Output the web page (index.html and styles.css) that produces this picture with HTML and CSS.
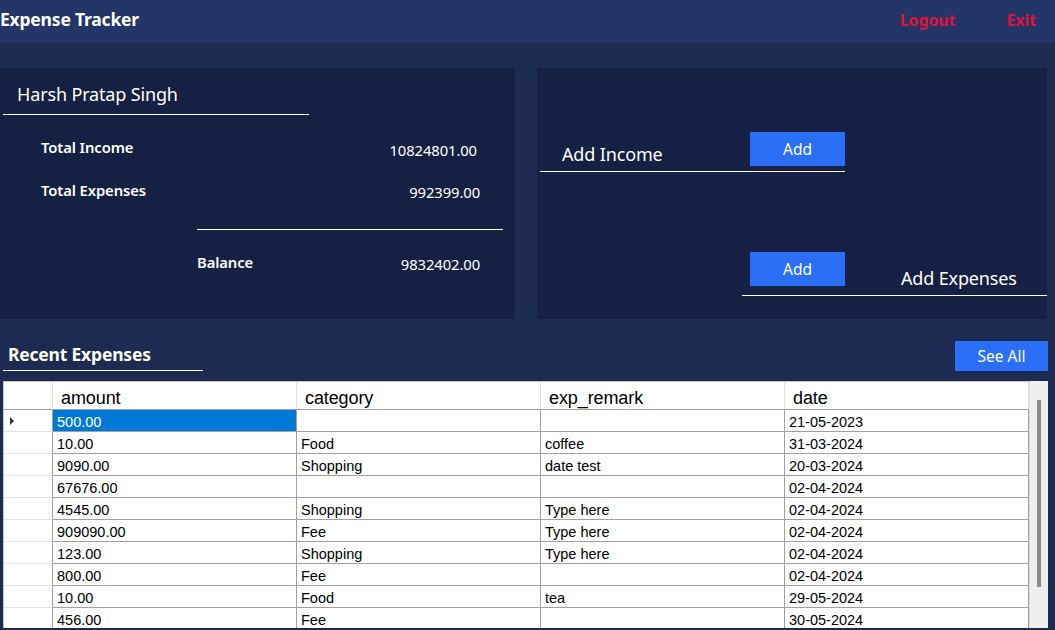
FILE: index.html
```html
<!DOCTYPE html>
<html lang="en">
<head>
<meta charset="utf-8">
<title>Expense Tracker</title>
<link rel="stylesheet" href="styles.css">
</head>
<body>
<header class="topbar">
  <h1 class="app-title">Expense Tracker</h1>
  <nav class="top-actions">
    <a class="top-link logout">Logout</a>
    <a class="top-link exit">Exit</a>
  </nav>
</header>
<main class="content">
  <section class="panels">
    <div class="panel summary">
      <div class="user-name">Harsh Pratap Singh</div>
      <div class="stat-row row-income"><span class="stat-label">Total Income</span><span class="stat-value">10824801.00</span></div>
      <div class="stat-row row-expenses"><span class="stat-label">Total Expenses</span><span class="stat-value">992399.00</span></div>
      <div class="divider"></div>
      <div class="stat-row row-balance"><span class="stat-label">Balance</span><span class="stat-value">9832402.00</span></div>
    </div>
    <div class="panel actions">
      <div class="action-block income-block">
        <span class="action-label">Add Income</span>
        <button class="btn add-btn">Add</button>
      </div>
      <div class="action-block expense-block">
        <button class="btn add-btn">Add</button>
        <span class="action-label">Add Expenses</span>
      </div>
    </div>
  </section>
  <section class="recent">
    <div class="recent-head">
      <h2 class="recent-title">Recent Expenses</h2>
      <button class="btn see-all">See All</button>
    </div>
    <div class="grid-frame">
      <div class="grid">
        <div class="grow ghead">
          <div class="rh"></div>
          <div class="hc">amount</div>
          <div class="hc">category</div>
          <div class="hc">exp_remark</div>
          <div class="hc">date</div>
        </div>
        <div class="grow">
          <div class="rh current"><span class="tri"></span></div>
          <div class="dc selected">500.00</div>
          <div class="dc"></div>
          <div class="dc"></div>
          <div class="dc">21-05-2023</div>
        </div>
        <div class="grow"><div class="rh"></div><div class="dc">10.00</div><div class="dc">Food</div><div class="dc">coffee</div><div class="dc">31-03-2024</div></div>
        <div class="grow"><div class="rh"></div><div class="dc">9090.00</div><div class="dc">Shopping</div><div class="dc">date test</div><div class="dc">20-03-2024</div></div>
        <div class="grow"><div class="rh"></div><div class="dc">67676.00</div><div class="dc"></div><div class="dc"></div><div class="dc">02-04-2024</div></div>
        <div class="grow"><div class="rh"></div><div class="dc">4545.00</div><div class="dc">Shopping</div><div class="dc">Type here</div><div class="dc">02-04-2024</div></div>
        <div class="grow"><div class="rh"></div><div class="dc">909090.00</div><div class="dc">Fee</div><div class="dc">Type here</div><div class="dc">02-04-2024</div></div>
        <div class="grow"><div class="rh"></div><div class="dc">123.00</div><div class="dc">Shopping</div><div class="dc">Type here</div><div class="dc">02-04-2024</div></div>
        <div class="grow"><div class="rh"></div><div class="dc">800.00</div><div class="dc">Fee</div><div class="dc"></div><div class="dc">02-04-2024</div></div>
        <div class="grow"><div class="rh"></div><div class="dc">10.00</div><div class="dc">Food</div><div class="dc">tea</div><div class="dc">29-05-2024</div></div>
        <div class="grow"><div class="rh"></div><div class="dc">456.00</div><div class="dc">Fee</div><div class="dc"></div><div class="dc">30-05-2024</div></div>
      </div>
      <div class="vscroll"><div class="thumb"></div></div>
    </div>
  </section>
</main>
</body>
</html>
```

FILE: styles.css
```css
* { box-sizing: border-box; }

html, body {
  margin: 0;
  padding: 0;
  height: 630px;
  overflow: hidden;
}

body {
  background: #1d2a52;
  font-family: "Noto Sans", "Open Sans", sans-serif;
  color: #ffffff;
}

/* ---------- top bar ---------- */
.topbar {
  height: 43px;
  background: #243567;
  display: flex;
  align-items: center;
  justify-content: space-between;
}

.app-title {
  margin: 0 0 5px 0;
  font-size: 17.5px;
  font-weight: 700;
  letter-spacing: -0.2px;
  line-height: 24px;
}

.top-actions {
  display: flex;
  gap: 51px;
  margin-right: 19px;
  margin-bottom: 3px;
}

.top-link {
  color: #dc143c;
  font-weight: 700;
  font-size: 16px;
  letter-spacing: -0.1px;
  cursor: pointer;
}

/* ---------- panels ---------- */
.content {
  padding-top: 25px;
}

.panels {
  display: flex;
  gap: 22px;
  height: 251px;
}

.panel {
  background: #162044;
  height: 251px;
}

.summary {
  width: 515px;
}

.actions {
  width: 510px;
  padding-top: 64px;
}

.user-name {
  margin-left: 3px;
  width: 306px;
  padding: 14px 0 8px 14px;
  font-size: 18px;
  line-height: 24px;
  letter-spacing: -0.15px;
  border-bottom: 1px solid #ffffff;
}

.stat-row {
  display: flex;
  align-items: flex-start;
  font-size: 14.8px;
  line-height: 20px;
}

.stat-label {
  font-weight: 600;
  letter-spacing: -0.1px;
}

.stat-value {
  margin-left: auto;
  letter-spacing: -0.1px;
}

.row-income {
  margin-top: 22px;
  padding: 0 38px 0 41px;
}
.row-income .stat-value { margin-top: 3px; }

.row-expenses {
  margin-top: 20px;
  padding: 0 35px 0 41px;
}
.row-expenses .stat-value { margin-top: 2px; }

.divider {
  margin: 27px 0 0 197px;
  width: 306px;
  height: 1px;
  background: #ffffff;
}

.row-balance {
  margin-top: 22px;
  padding: 0 35px 0 197px;
}
.row-balance .stat-value { margin-top: 2px; }

/* ---------- action blocks ---------- */
.action-block {
  display: flex;
  width: 305px;
  border-bottom: 1px solid #ffffff;
  padding-bottom: 4px;
}

.income-block {
  margin-left: 3px;
  padding-bottom: 5px;
}

.expense-block {
  margin-left: 205px;
  margin-top: 80px;
  height: 44px;
}

.action-label {
  font-size: 18px;
  line-height: 24px;
  letter-spacing: -0.15px;
  align-self: flex-end;
}

.income-block .action-label {
  margin-left: 22px;
  margin-bottom: 0;
}

.income-block .add-btn {
  margin-left: auto;
}

.expense-block .add-btn {
  margin-left: 8px;
  align-self: flex-start;
}

.expense-block .action-label {
  margin-left: 56px;
  margin-bottom: 1px;
}

.btn {
  border: none;
  background: #2a6ff6;
  color: #ffffff;
  font-family: "Noto Sans", "Open Sans", sans-serif;
  font-size: 15.5px;
  padding: 0;
  cursor: pointer;
}

.add-btn {
  width: 95px;
  height: 34px;
}

/* ---------- recent expenses ---------- */
.recent {
  padding-top: 22px;
}

.recent-head {
  display: flex;
  justify-content: space-between;
  align-items: flex-start;
  height: 30px;
}

.recent-title {
  margin: 0 0 0 3px;
  width: 200px;
  padding: 1px 0 4px 5px;
  font-size: 17.5px;
  font-weight: 700;
  line-height: 24px;
  letter-spacing: -0.2px;
  border-bottom: 1px solid #ffffff;
}

.see-all {
  width: 93px;
  height: 30px;
  margin-right: 7px;
  font-size: 15.5px;
}

.grid-frame {
  margin: 10px 7px 0 3px;
  height: 247px;
  display: flex;
  overflow: hidden;
  background: #ffffff;
}

.grid {
  width: 1026px;
  border-top: 1px solid #c8c8c8;
  border-left: 1px solid #c8c8c8;
  font-family: "Liberation Sans", Arial, sans-serif;
  color: #000000;
}

.grow {
  display: grid;
  grid-template-columns: 49px 244px 244px 244px 244px;
  height: 22px;
}

.ghead {
  height: 28px;
}

.rh {
  border-right: 1px solid #a0a0a0;
  border-bottom: 1px solid #e4e4e4;
  display: flex;
  align-items: center;
}

.ghead .rh {
  border-right: 1px solid #e0e0e0;
  border-bottom: 1px solid #a0a0a0;
}

.hc {
  border-right: 1px solid #e0e0e0;
  border-bottom: 1px solid #a0a0a0;
  padding: 5px 0 0 8px;
  font-size: 18px;
  line-height: 22px;
  letter-spacing: -0.1px;
}

.dc {
  border-right: 1px solid #a0a0a0;
  border-bottom: 1px solid #a0a0a0;
  padding: 4px 0 0 4px;
  font-size: 14.5px;
  line-height: 17px;
  white-space: nowrap;
}

.dc.selected {
  background: #0078d7;
  color: #ffffff;
}

.tri {
  width: 0;
  height: 0;
  margin-left: 6px;
  border-top: 4px solid transparent;
  border-bottom: 4px solid transparent;
  border-left: 4px solid #333333;
}

.vscroll {
  width: 19px;
  background: #efefef;
  border-left: 1px solid #dcdcdc;
  padding: 19px 0 0 7px;
}

.thumb {
  width: 4px;
  height: 187px;
  background: #8a8a8a;
}
```
